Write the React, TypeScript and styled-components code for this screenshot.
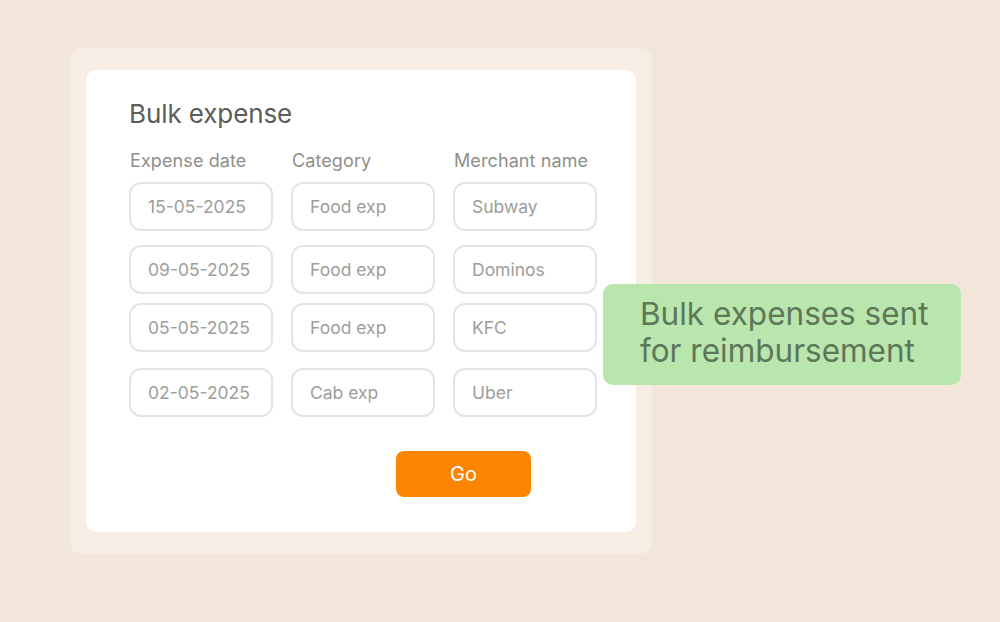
import React from 'react'
import styled, { createGlobalStyle } from 'styled-components'

const GlobalStyle = createGlobalStyle`
  html, body {
    margin: 0;
    padding: 0;
    background: #f2e6db;
    font-family: Inter, "Noto Sans", "Liberation Sans", sans-serif;
  }
`

const Page = styled.div`
  width: 1000px;
  height: 622px;
  position: relative;
  padding: 48px 0 0 70px;
  box-sizing: border-box;
`

const Panel = styled.div`
  width: 582px;
  height: 506px;
  background: #f6ede5;
  border-radius: 12px;
  padding: 22px 16px;
  box-sizing: border-box;
`

const Card = styled.div`
  background: #ffffff;
  border-radius: 10px;
  height: 100%;
  padding: 28px 0 0 43px;
  box-sizing: border-box;
`

const Title = styled.h1`
  margin: 0;
  font-size: 26px;
  font-weight: 400;
  line-height: 32px;
  color: #5b5d59;
  letter-spacing: -0.1px;
`

const Grid = styled.div`
  margin-top: 20px;
  display: flex;
  flex-direction: column;
`

const Row = styled.div<{ $gap: number }>`
  display: grid;
  grid-template-columns: repeat(3, 144px);
  column-gap: 18px;
  margin-top: ${p => p.$gap}px;
`

const Label = styled.div`
  font-size: 18px;
  line-height: 22px;
  color: #8e8f8b;
  padding-left: 1px;
  letter-spacing: 0.1px;
`

const Field = styled.div`
  height: 49px;
  border: 2px solid #e2e4e7;
  border-radius: 12px;
  box-sizing: border-box;
  display: flex;
  align-items: center;
  padding-left: 17px;
  font-size: 17.5px;
  color: #9d9e9a;
`

const GoButton = styled.button`
  margin: 34px 0 0 267px;
  width: 135px;
  height: 46px;
  border: none;
  border-radius: 8px;
  background: #fb8500;
  color: #ffffff;
  font-family: inherit;
  font-size: 20px;
  font-weight: 400;
`

const Toast = styled.div`
  position: absolute;
  left: 603px;
  top: 284px;
  width: 358px;
  height: 101px;
  box-sizing: border-box;
  background: #b9e6ad;
  border-radius: 10px;
  padding: 11px 0 0 37px;
  font-size: 31.5px;
  line-height: 37px;
  color: #5d7759;
`

const rows = [
  { gap: 10, cells: ['15-05-2025', 'Food exp', 'Subway'] },
  { gap: 14, cells: ['09-05-2025', 'Food exp', 'Dominos'] },
  { gap: 9, cells: ['05-05-2025', 'Food exp', 'KFC'] },
  { gap: 16, cells: ['02-05-2025', 'Cab exp', 'Uber'] },
]

const App = () => {
  return (
    <Page>
      <GlobalStyle />
      <Panel>
        <Card>
          <Title>Bulk expense</Title>
          <Grid>
            <Row $gap={0}>
              <Label>Expense date</Label>
              <Label>Category</Label>
              <Label>Merchant name</Label>
            </Row>
            {rows.map((r, i) => (
              <Row key={i} $gap={r.gap}>
                {r.cells.map(c => (
                  <Field key={c}>{c}</Field>
                ))}
              </Row>
            ))}
          </Grid>
          <GoButton>Go</GoButton>
        </Card>
      </Panel>
      <Toast>
        Bulk expenses sent
        <br />
        for reimbursement
      </Toast>
    </Page>
  )
}

export default App
